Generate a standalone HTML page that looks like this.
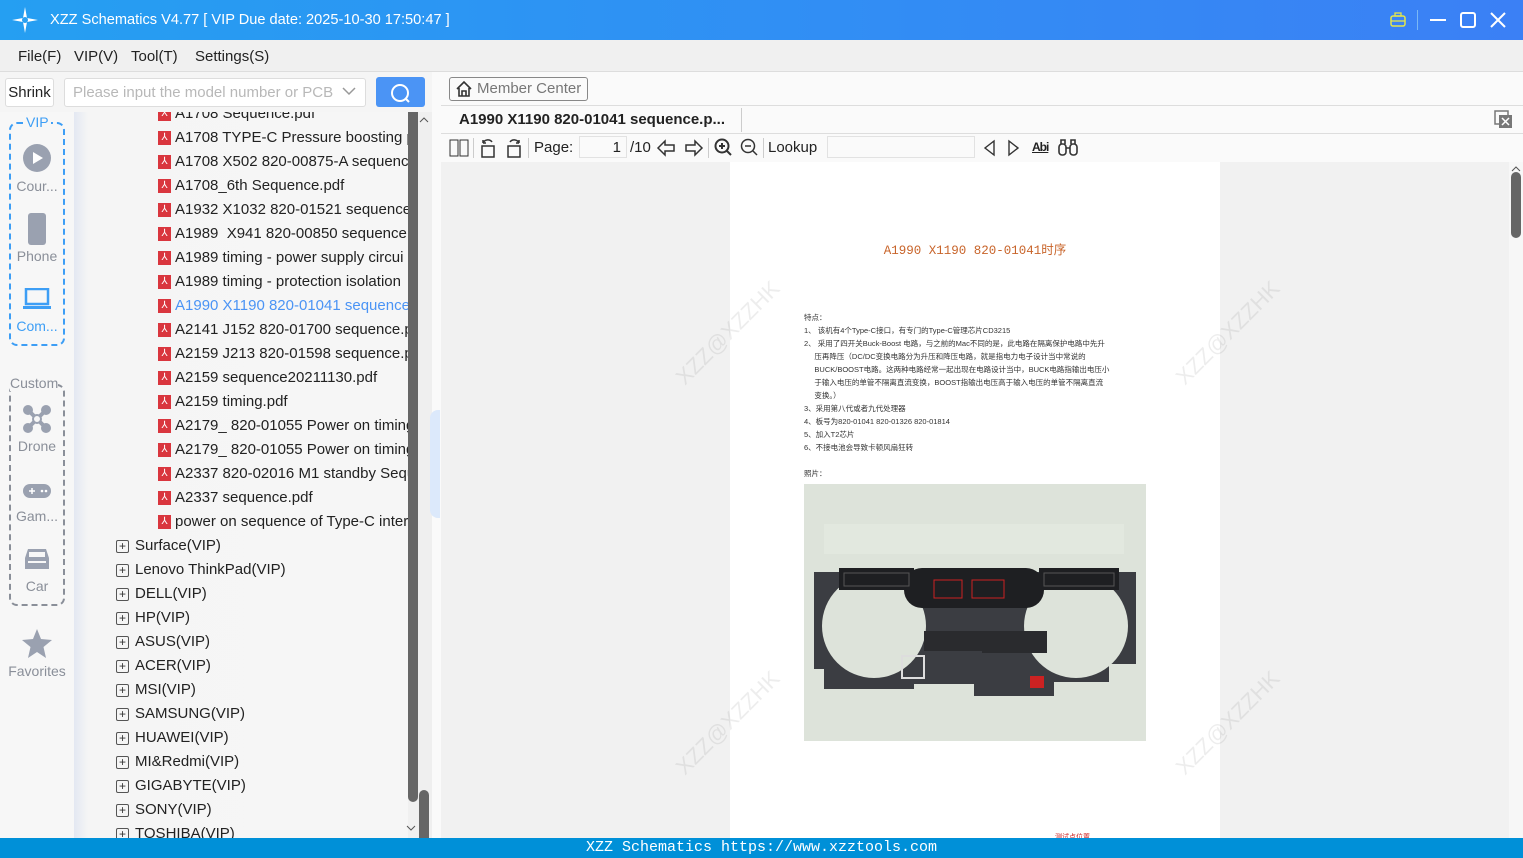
<!DOCTYPE html>
<html><head><meta charset="utf-8"><style>
*{box-sizing:border-box;margin:0;padding:0}
body{width:1523px;height:858px;overflow:hidden;font-family:"Liberation Sans","Noto Sans CJK SC",sans-serif;background:#f0f0f0;position:relative;color:#222}
.abs{position:absolute}
#title{left:0;top:0;width:1523px;height:40px;background:linear-gradient(90deg,#259ff2,#3b80f5);color:#fff;font-size:14.6px}
#menu{top:40px;left:0;width:1523px;height:32px;background:#f0f0f0;font-size:15px;border-bottom:1px solid #ddd}
#menu span{position:absolute;top:8px}
.side{left:0;top:112px;width:74px;height:726px;background:#f7f7f7}
.tree{left:74px;top:112px;width:334px;height:726px;background:linear-gradient(90deg,#e3e8f2 0,#f5f5f5 14px,#f6f6f6 100%);overflow:hidden}
.row{position:absolute;height:24px;font-size:15px;line-height:24px;white-space:nowrap}
.pdf{position:absolute;left:84px;top:5px;width:13px;height:14px;background:#d9363e;color:#fff;font-size:10px;line-height:14px;text-align:center}
.plus{position:absolute;left:42px;top:6px;width:13px;height:13px;border:1px solid #555;border-radius:2px;font-size:12px;line-height:10px;text-align:center;color:#333}
.sb-lbl{position:absolute;width:74px;text-align:center;font-size:14px;color:#8a8f99}
.tb{font-size:15px;color:#222}
</style></head><body>
<div id="title" class="abs">
 <svg class="abs" style="left:12px;top:7px" width="26" height="26" viewBox="0 0 26 26"><path d="M13 0 L15 11 L26 13 L15 15 L13 26 L11 15 L0 13 L11 11Z" fill="#fff"/><circle cx="13" cy="13" r="3" fill="#2aa0f2"/></svg>
 <span class="abs" style="left:50px;top:12px">XZZ Schematics V4.77 [ VIP Due date: 2025-10-30 17:50:47 ]</span>
 <svg class="abs" style="left:1389px;top:11px" width="18" height="18"><rect x="2" y="5" width="14" height="10" rx="2" fill="none" stroke="#e5e64a" stroke-width="1.5"/><rect x="6" y="2" width="6" height="3" fill="none" stroke="#e5e64a" stroke-width="1.3"/><line x1="2" y1="10" x2="16" y2="10" stroke="#e5e64a" stroke-width="1.3"/></svg>
 <div class="abs" style="left:1417px;top:10px;width:1px;height:20px;background:#7ab8f5"></div>
 <div class="abs" style="left:1430px;top:19px;width:16px;height:2px;background:#fff"></div>
 <div class="abs" style="left:1460px;top:12px;width:16px;height:16px;border:2px solid #fff;border-radius:3px"></div>
 <svg class="abs" style="left:1490px;top:12px" width="16" height="16"><path d="M1 1L15 15M15 1L1 15" stroke="#fff" stroke-width="2"/></svg>
</div>
<div id="menu" class="abs"><span style="left:18px">File(F)</span><span style="left:74px">VIP(V)</span><span style="left:131px">Tool(T)</span><span style="left:195px">Settings(S)</span></div>
<div class="abs" style="left:0;top:72px;width:432px;height:40px;background:#f5f5f5"></div>
<div class="abs" style="left:5px;top:78px;width:49px;height:29px;border:1px solid #ddd;border-radius:3px;background:#fff;font-size:15px;line-height:27px;text-align:center">Shrink</div>
<div class="abs" style="left:64px;top:78px;width:302px;height:29px;border:1px solid #ddd;border-radius:3px;background:#fff;font-size:15px;line-height:27px;padding-left:8px;color:#b8b8b8">Please input the model number or PCB</div>
<svg class="abs" style="left:342px;top:86px" width="14" height="10"><path d="M1 2L7 8L13 2" stroke="#999" stroke-width="1.5" fill="none"/></svg>
<div class="abs" style="left:376px;top:77px;width:49px;height:30px;background:#4b94f5;border-radius:3px"></div>
<svg class="abs" style="left:389px;top:82px" width="22" height="22"><circle cx="11" cy="11" r="8" stroke="#fff" stroke-width="2" fill="none"/><path d="M16 16L20 20" stroke="#fff" stroke-width="2"/></svg>
<div class="abs side"></div>
<div class="abs" style="left:9px;top:122px;width:56px;height:224px;border:2px dashed #3d9ef5;border-radius:8px"></div>
<div class="abs" style="left:24px;top:114px;background:#f7f7f7;color:#3d9ef5;font-size:14px;padding:0 2px">VIP</div>
<svg class="abs" style="left:23px;top:144px" width="28" height="28"><circle cx="14" cy="14" r="14" fill="#9aa1b0"/><path d="M10 8L20 14L10 20Z" fill="#fff"/></svg>
<div class="sb-lbl" style="top:178px">Cour...</div>
<svg class="abs" style="left:28px;top:213px" width="18" height="32"><rect width="18" height="32" rx="3" fill="#9aa1b0"/></svg>
<div class="sb-lbl" style="top:248px">Phone</div>
<svg class="abs" style="left:23px;top:288px" width="28" height="22"><rect x="3" y="1" width="22" height="15" fill="none" stroke="#3d9ef5" stroke-width="2.5"/><rect x="0" y="18" width="28" height="3" fill="#3d9ef5"/></svg>
<div class="sb-lbl" style="top:318px;color:#3d9ef5">Com...</div>
<div class="abs" style="left:9px;top:384px;width:56px;height:222px;border:2px dashed #8a8f99;border-radius:8px"></div>
<div class="abs" style="left:10px;top:375px;background:#f7f7f7;color:#8a8f99;font-size:14px">Custom</div>
<svg class="abs" style="left:22px;top:404px" width="30" height="30" fill="#9aa1b0"><circle cx="6" cy="6" r="5"/><circle cx="24" cy="6" r="5"/><circle cx="6" cy="24" r="5"/><circle cx="24" cy="24" r="5"/><path d="M6 6L24 24M24 6L6 24" stroke="#9aa1b0" stroke-width="4"/><circle cx="15" cy="15" r="4" fill="#f7f7f7" stroke="#9aa1b0" stroke-width="2"/></svg>
<div class="sb-lbl" style="top:438px">Drone</div>
<svg class="abs" style="left:23px;top:484px" width="28" height="14"><rect width="28" height="14" rx="7" fill="#9aa1b0"/><path d="M6 7H12M9 4V10" stroke="#fff" stroke-width="1.5"/><circle cx="19" cy="7" r="1.3" fill="#fff"/><circle cx="23" cy="7" r="1.3" fill="#fff"/></svg>
<div class="sb-lbl" style="top:508px">Gam...</div>
<svg class="abs" style="left:23px;top:547px" width="28" height="24" fill="#9aa1b0"><path d="M5 2H23L26 11V22H2V11Z"/><rect x="6" y="5" width="16" height="5" fill="#f7f7f7"/><rect x="5" y="14" width="18" height="2" fill="#f7f7f7"/></svg>
<div class="sb-lbl" style="top:578px">Car</div>
<svg class="abs" style="left:22px;top:629px" width="30" height="29"><path d="M15 0L19 10L30 11L21.5 18L24 29L15 23L6 29L8.5 18L0 11L11 10Z" fill="#9aa1b0"/></svg>
<div class="sb-lbl" style="top:663px">Favorites</div>
<div class="abs tree">
<div class="row" style="top:-10px"><div class="pdf">⅄</div><span style="position:absolute;left:101px">A1708 Sequence.pdf</span></div>
<div class="row" style="top:14px"><div class="pdf">⅄</div><span style="position:absolute;left:101px">A1708 TYPE-C Pressure boosting pr</span></div>
<div class="row" style="top:38px"><div class="pdf">⅄</div><span style="position:absolute;left:101px">A1708 X502 820-00875-A sequence</span></div>
<div class="row" style="top:62px"><div class="pdf">⅄</div><span style="position:absolute;left:101px">A1708_6th Sequence.pdf</span></div>
<div class="row" style="top:86px"><div class="pdf">⅄</div><span style="position:absolute;left:101px">A1932 X1032 820-01521 sequence.p</span></div>
<div class="row" style="top:110px"><div class="pdf">⅄</div><span style="position:absolute;left:101px">A1989&nbsp; X941 820-00850 sequence.p</span></div>
<div class="row" style="top:134px"><div class="pdf">⅄</div><span style="position:absolute;left:101px">A1989 timing - power supply circui</span></div>
<div class="row" style="top:158px"><div class="pdf">⅄</div><span style="position:absolute;left:101px">A1989 timing - protection isolation</span></div>
<div class="row" style="top:182px;color:#4b94f5"><div class="pdf">⅄</div><span style="position:absolute;left:101px">A1990 X1190 820-01041 sequence.p</span></div>
<div class="row" style="top:206px"><div class="pdf">⅄</div><span style="position:absolute;left:101px">A2141 J152 820-01700 sequence.pd</span></div>
<div class="row" style="top:230px"><div class="pdf">⅄</div><span style="position:absolute;left:101px">A2159 J213 820-01598 sequence.pd</span></div>
<div class="row" style="top:254px"><div class="pdf">⅄</div><span style="position:absolute;left:101px">A2159 sequence20211130.pdf</span></div>
<div class="row" style="top:278px"><div class="pdf">⅄</div><span style="position:absolute;left:101px">A2159 timing.pdf</span></div>
<div class="row" style="top:302px"><div class="pdf">⅄</div><span style="position:absolute;left:101px">A2179_ 820-01055 Power on timing</span></div>
<div class="row" style="top:326px"><div class="pdf">⅄</div><span style="position:absolute;left:101px">A2179_ 820-01055 Power on timing</span></div>
<div class="row" style="top:350px"><div class="pdf">⅄</div><span style="position:absolute;left:101px">A2337 820-02016 M1 standby Seque</span></div>
<div class="row" style="top:374px"><div class="pdf">⅄</div><span style="position:absolute;left:101px">A2337 sequence.pdf</span></div>
<div class="row" style="top:398px"><div class="pdf">⅄</div><span style="position:absolute;left:101px">power on sequence of Type-C inter</span></div>
<div class="row" style="top:422px"><div class="plus">+</div><span style="position:absolute;left:61px">Surface(VIP)</span></div>
<div class="row" style="top:446px"><div class="plus">+</div><span style="position:absolute;left:61px">Lenovo ThinkPad(VIP)</span></div>
<div class="row" style="top:470px"><div class="plus">+</div><span style="position:absolute;left:61px">DELL(VIP)</span></div>
<div class="row" style="top:494px"><div class="plus">+</div><span style="position:absolute;left:61px">HP(VIP)</span></div>
<div class="row" style="top:518px"><div class="plus">+</div><span style="position:absolute;left:61px">ASUS(VIP)</span></div>
<div class="row" style="top:542px"><div class="plus">+</div><span style="position:absolute;left:61px">ACER(VIP)</span></div>
<div class="row" style="top:566px"><div class="plus">+</div><span style="position:absolute;left:61px">MSI(VIP)</span></div>
<div class="row" style="top:590px"><div class="plus">+</div><span style="position:absolute;left:61px">SAMSUNG(VIP)</span></div>
<div class="row" style="top:614px"><div class="plus">+</div><span style="position:absolute;left:61px">HUAWEI(VIP)</span></div>
<div class="row" style="top:638px"><div class="plus">+</div><span style="position:absolute;left:61px">MI&amp;Redmi(VIP)</span></div>
<div class="row" style="top:662px"><div class="plus">+</div><span style="position:absolute;left:61px">GIGABYTE(VIP)</span></div>
<div class="row" style="top:686px"><div class="plus">+</div><span style="position:absolute;left:61px">SONY(VIP)</span></div>
<div class="row" style="top:710px"><div class="plus">+</div><span style="position:absolute;left:61px">TOSHIBA(VIP)</span></div>
</div>
<div class="abs" style="left:408px;top:112px;width:10px;height:690px;background:#666;border-radius:0 0 5px 5px"></div>
<div class="abs" style="left:418px;top:112px;width:14px;height:726px;background:#efefef"></div>
<svg class="abs" style="left:419px;top:116px" width="10" height="8"><path d="M1 6L5 2L9 6" stroke="#555" fill="none"/></svg>
<div class="abs" style="left:419px;top:790px;width:10px;height:48px;background:#666;border-radius:5px 5px 0 0"></div>
<svg class="abs" style="left:406px;top:824px" width="10" height="8"><path d="M1 2L5 6L9 2" stroke="#555" fill="none"/></svg>
<div class="abs" style="left:432px;top:72px;width:9px;height:766px;background:#fafafa"></div>
<div class="abs" style="left:430px;top:410px;width:10px;height:108px;background:#dce9fb;border-radius:8px 0 0 8px"></div>
<div class="abs" style="left:441px;top:72px;width:1082px;height:90px;background:#fafafa"></div>
<div class="abs" style="left:441px;top:105px;width:1082px;height:1px;background:#ddd"></div>
<div class="abs" style="left:441px;top:133px;width:1082px;height:1px;background:#ddd"></div>
<div class="abs" style="left:449px;top:77px;width:139px;height:24px;border:1px solid #888;border-radius:3px;font-size:15px;line-height:22px;color:#777;padding-left:27px">Member Center</div>
<svg class="abs" style="left:455px;top:80px" width="18" height="18"><path d="M2 9L9 2L16 9M4 8V16H14V8M7 16V11H11V16" stroke="#333" stroke-width="1.6" fill="none"/></svg>
<div class="abs" style="left:459px;top:111px;font-size:15px;font-weight:bold">A1990 X1190 820-01041 sequence.p...</div>
<div class="abs" style="left:741px;top:108px;width:1px;height:24px;background:#ccc"></div>
<svg class="abs" style="left:1494px;top:110px" width="19" height="19"><rect x="1" y="1" width="13" height="13" fill="none" stroke="#777" stroke-width="1.5"/><rect x="5" y="5" width="13" height="13" fill="#777"/><path d="M8 8L15 15M15 8L8 15" stroke="#fff" stroke-width="1.5"/></svg>
<svg class="abs" style="left:449px;top:139px" width="20" height="18"><rect x="1" y="1" width="8" height="16" fill="none" stroke="#333"/><rect x="11" y="1" width="8" height="16" fill="none" stroke="#333"/></svg>
<div class="abs" style="left:473px;top:138px;width:1px;height:20px;background:#ccc"></div>
<svg class="abs" style="left:479px;top:138px" width="46" height="20"><path d="M3 8H15V19H3Z M4 5C6 1 11 1 13 4 M4 5V2 M4 5H7" stroke="#333" stroke-width="1.5" fill="none"/><path d="M29 8H41V19H29Z M40 5C38 1 33 1 31 4 M40 5V2 M40 5H37" stroke="#333" stroke-width="1.5" fill="none"/></svg>
<div class="abs" style="left:528px;top:138px;width:1px;height:20px;background:#ccc"></div>
<div class="abs tb" style="left:534px;top:139px">Page:</div>
<div class="abs" style="left:579px;top:136px;width:48px;height:22px;border:1px solid #e2e2e2;background:#fafafa;font-size:15px;text-align:right;padding-right:5px;line-height:21px">1</div>
<div class="abs tb" style="left:630px;top:139px">/10</div>
<svg class="abs" style="left:656px;top:139px" width="48" height="18"><path d="M2 9L9 2V6H18V12H9V16Z" stroke="#333" stroke-width="1.5" fill="none"/><path d="M46 9L39 2V6H30V12H39V16Z" stroke="#333" stroke-width="1.5" fill="none"/></svg>
<div class="abs" style="left:708px;top:138px;width:1px;height:20px;background:#ccc"></div>
<svg class="abs" style="left:714px;top:138px" width="46" height="20"><circle cx="8" cy="8" r="6.5" stroke="#333" stroke-width="2" fill="none"/><path d="M5 8H11M8 5V11M13 13L17 17" stroke="#333" stroke-width="2"/><circle cx="34" cy="8" r="6.5" stroke="#333" stroke-width="1.5" fill="none"/><path d="M31 8H37M39 13L43 17" stroke="#333" stroke-width="1.5"/></svg>
<div class="abs" style="left:763px;top:138px;width:1px;height:20px;background:#ccc"></div>
<div class="abs tb" style="left:768px;top:139px">Lookup</div>
<div class="abs" style="left:827px;top:136px;width:148px;height:22px;border:1px solid #e2e2e2;background:#fafafa"></div>
<svg class="abs" style="left:982px;top:139px" width="40" height="18"><path d="M12 2L3 9L12 16Z M27 2L36 9L27 16Z" stroke="#333" stroke-width="1.4" fill="none"/></svg>
<div class="abs" style="left:1032px;top:140px;font-size:12px;font-weight:bold;text-decoration:underline;letter-spacing:-1px">Abi</div>
<svg class="abs" style="left:1058px;top:139px" width="20" height="17"><rect x="1" y="5" width="7" height="11" rx="3" stroke="#333" stroke-width="1.6" fill="none"/><rect x="12" y="5" width="7" height="11" rx="3" stroke="#333" stroke-width="1.6" fill="none"/><path d="M3 5V1H7V5M13 5V1H17V5M8 9H12" stroke="#333" stroke-width="1.6" fill="none"/></svg>
<div class="abs" style="left:441px;top:162px;width:1068px;height:676px;background:#f1f1f1"></div>
<div class="abs" style="left:1509px;top:162px;width:14px;height:676px;background:#f7f7f7"></div>
<div class="abs" style="left:1511px;top:172px;width:10px;height:66px;background:#666;border-radius:5px"></div>
<svg class="abs" style="left:1511px;top:165px" width="10" height="7"><path d="M1 6L5 2L9 6" stroke="#555" fill="none"/></svg>
<div class="abs" style="left:730px;top:162px;width:490px;height:676px;background:#fff;overflow:hidden">
 <div class="abs" style="left:0;width:490px;top:77px;text-align:center;color:#c8642a;font-family:'Liberation Mono','Noto Sans CJK SC',monospace;font-size:12.5px">A1990 X1190 820-01041时序</div>
 <div class="abs" style="left:74px;top:149px;font-size:7.5px;line-height:13px;color:#333;width:345px;font-family:'Liberation Sans','Noto Sans CJK SC',sans-serif">
 特点：<br>1、 该机有4个Type-C接口，有专门的Type-C管理芯片CD3215<br>2、 采用了四开关Buck-Boost 电路，与之前的Mac不同的是，此电路在隔离保护电路中先升<br>&nbsp;&nbsp;&nbsp;&nbsp;&nbsp;压再降压（DC/DC变换电路分为升压和降压电路，就是指电力电子设计当中常说的<br>&nbsp;&nbsp;&nbsp;&nbsp;&nbsp;BUCK/BOOST电路。这两种电路经常一起出现在电路设计当中，BUCK电路指输出电压小<br>&nbsp;&nbsp;&nbsp;&nbsp;&nbsp;于输入电压的单管不隔离直流变换，BOOST指输出电压高于输入电压的单管不隔离直流<br>&nbsp;&nbsp;&nbsp;&nbsp;&nbsp;变换。）<br>3、采用第八代或者九代处理器<br>4、板号为820-01041 820-01326 820-01814<br>5、加入T2芯片<br>6、不接电池会导致卡顿风扇狂转<br><br>照片：</div>
 <svg class="abs" style="left:74px;top:322px" width="342" height="257" viewBox="0 0 342 257">
  <rect width="342" height="257" fill="#dde3da"/>
  <path d="M10 88 H332 V180 H305 V198 H250 V212 H170 V200 H110 V205 H20 V185 H10Z" fill="#3b3d42"/>
  <circle cx="70" cy="142" r="52" fill="#dde3da"/><circle cx="272" cy="142" r="52" fill="#dde3da"/>
  <rect x="100" y="84" width="140" height="40" rx="18" fill="#1e1f22"/>
  <rect x="35" y="84" width="75" height="22" fill="#1e1f22"/><rect x="235" y="84" width="80" height="22" fill="#1e1f22"/>
  <rect x="40" y="89" width="65" height="13" fill="none" stroke="#555"/><rect x="240" y="89" width="70" height="13" fill="none" stroke="#555"/>
  <rect x="120" y="147" width="65" height="20" fill="#2a2b2e"/><rect x="178" y="147" width="65" height="22" fill="#2a2b2e"/>
  <rect x="98" y="172" width="22" height="22" fill="none" stroke="#ddd" stroke-width="2"/>
  <rect x="130" y="96" width="28" height="18" fill="none" stroke="#c22" /><rect x="168" y="96" width="32" height="18" fill="none" stroke="#c22"/>
  <rect x="226" y="192" width="14" height="12" fill="#c22"/>
  <rect x="20" y="40" width="300" height="30" fill="#e6ebe3" opacity=".6"/>
 </svg>
 <div class="abs" style="left:325px;top:670px;font-size:7px;color:#c22">测试点位置 ...</div>
</div>
<div class="abs" style="left:660px;top:250px;width:560px;height:560px;font-size:22px;color:rgba(0,0,0,0.07);pointer-events:none">
 <div class="abs" style="left:0;top:70px;transform:rotate(-45deg)">XZZ@XZZHK</div>
 <div class="abs" style="left:500px;top:70px;transform:rotate(-45deg)">XZZ@XZZHK</div>
 <div class="abs" style="left:0;top:460px;transform:rotate(-45deg)">XZZ@XZZHK</div>
 <div class="abs" style="left:500px;top:460px;transform:rotate(-45deg)">XZZ@XZZHK</div>
</div>
<div class="abs" style="left:0;top:838px;width:1523px;height:20px;background:#0090d8;color:#fff;font-family:'Liberation Mono',monospace;font-size:15px;line-height:20px;text-align:center">XZZ Schematics https://www.xzztools.com</div>
</body></html>
